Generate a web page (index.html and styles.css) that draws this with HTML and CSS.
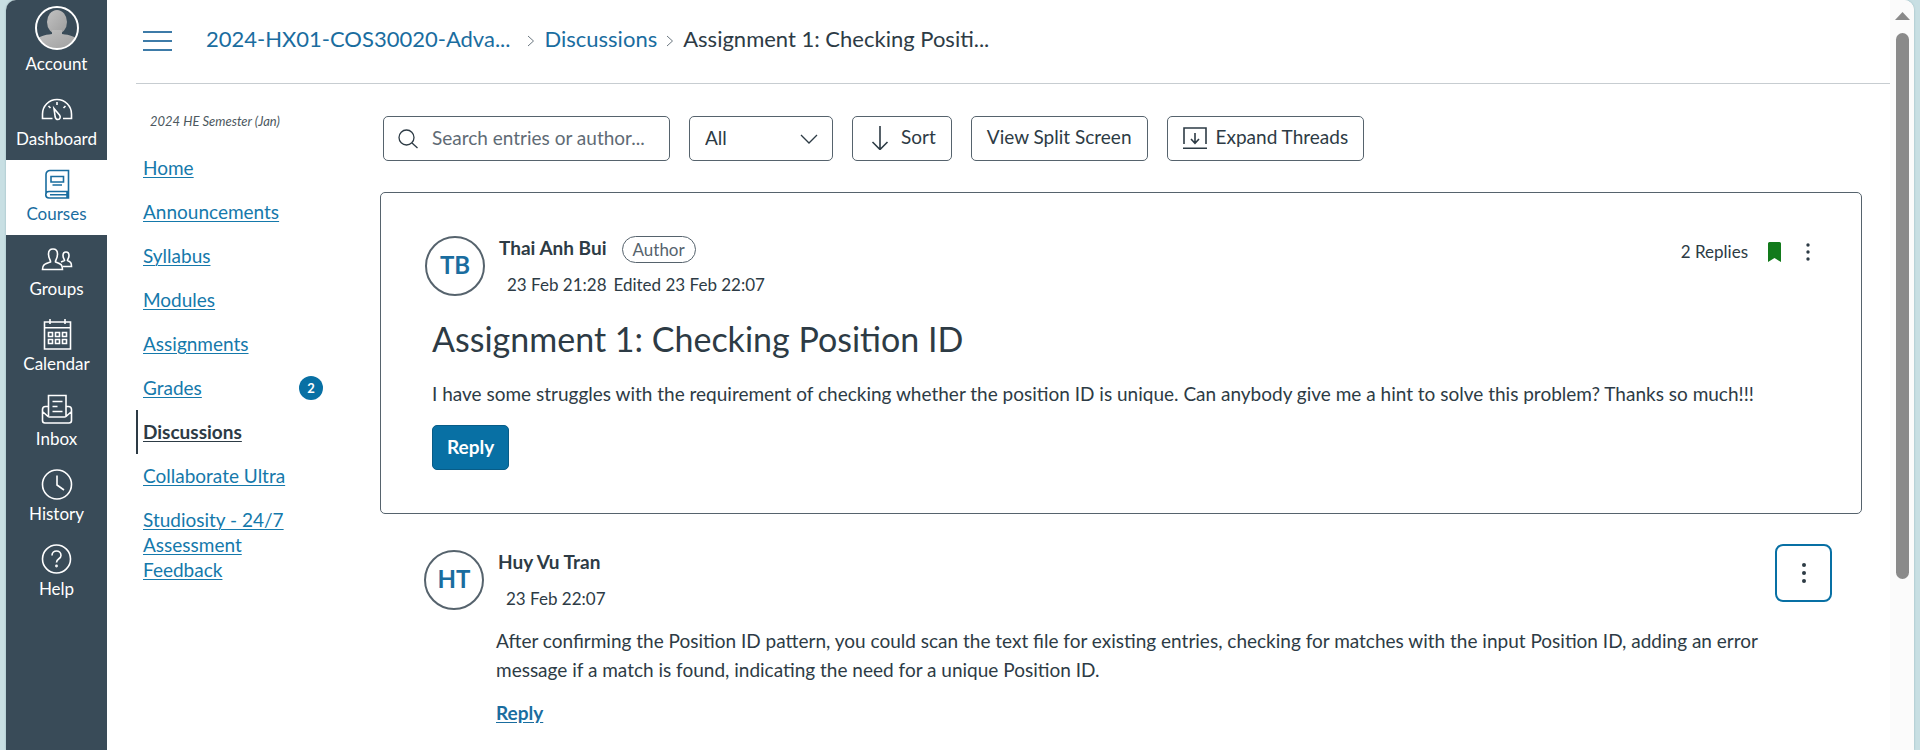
FILE: index.html
```html
<!DOCTYPE html>
<html lang="en">
<head>
<meta charset="utf-8">
<title>Assignment 1: Checking Position ID</title>
<link rel="stylesheet" href="styles.css">
</head>
<body>
<div class="app">
  <nav class="rail" aria-label="Global navigation">
    <a class="rail-item rail-account" href="#">
      <svg class="rail-avatar" viewBox="0 0 44 44" aria-hidden="true">
        <defs>
          <clipPath id="face"><circle cx="22" cy="22" r="21"/></clipPath>
          <linearGradient id="person" x1="0" y1="0" x2="1" y2="1"><stop offset="0" stop-color="#c2c2c2"/><stop offset="1" stop-color="#9c9c9c"/></linearGradient>
        </defs>
        <g clip-path="url(#face)" fill="url(#person)">
          <ellipse cx="22" cy="16" rx="10" ry="12"/>
          <path d="M17 24h10v4c8 1 14 2 16 8v9H1v-9c2-6 8-7 16-8z"/>
        </g>
        <circle cx="22" cy="22" r="21" fill="none" stroke="#fff" stroke-width="2"/>
      </svg>
      <span>Account</span>
    </a>
    <a class="rail-item" href="#">
      <svg class="rail-icon" viewBox="0 0 32 32" aria-hidden="true"><path d="M11.500 25.500H1.500V21a14.500 14.500 0 0 1 29 0v4.500H22M16 9v3M7.500 13l2 2M24.500 13l-2 2"/><path d="M13 15.500l5.500 6.500c1.500 2 .5 4.500-1.500 4.500-1.500 0-2.500-1-2.800-2.500z"/></svg>
      <span>Dashboard</span>
    </a>
    <a class="rail-item rail-item-active" href="#" aria-current="page">
      <svg class="rail-icon" viewBox="0 0 32 32" aria-hidden="true"><path d="M27.500 23V2.500H9a4 4 0 0 0-4 4V26M27.500 23.500H8a3 3 0 0 0 0 6.500h19.500zM9 26.700h18M26 23.500V30M10 8.500h12.500v5.500H10zM11.500 17h9.500"/></svg>
      <span>Courses</span>
    </a>
    <a class="rail-item" href="#">
      <svg class="rail-icon" viewBox="0 0 32 32" aria-hidden="true"><path d="M1.500 26.500h20c0-5-1.500-5.500-7-7.500-.5-2 2-3 2-8 0-3-1.500-5-4.500-5s-4.500 2-4.500 5c0 5 2.500 6 2 8-6.500 2-8 3-8 7.500z"/><path d="M22 23.500h8.500c0-4-1-4.500-4-6 0-1.500 1.500-2 1.500-5 0-2-1-3.500-3-3.500s-3 1.500-3 3.500c0 3 1.500 3.500 1.500 5l-3.500 1.500"/></svg>
      <span>Groups</span>
    </a>
    <a class="rail-item" href="#">
      <svg class="rail-icon" viewBox="0 0 32 32" aria-hidden="true"><path d="M3.500 4h26v27h-26zM3.500 9.700h26M9 1v5M24 1v5M7.500 14.500h4v4h-4zM14.500 14.500h4v4h-4zM21.500 14.500h4v4h-4zM7.500 21.500h4v4h-4zM14.500 21.500h4v4h-4zM21.500 21.500h4v4h-4z"/></svg>
      <span>Calendar</span>
    </a>
    <a class="rail-item" href="#">
      <svg class="rail-icon" viewBox="0 0 32 32" aria-hidden="true"><path d="M7.500 23V2.500h17.500V23M7.500 13.500h-3a3 3 0 0 0-3 3v11a2.500 2.500 0 0 0 2.500 2.500h24a2.500 2.500 0 0 0 2.500-2.500v-11a3 3 0 0 0-3-3H25M2 19l5 4.500c.5.500 1 .5 1.500.5h15c.5 0 1 0 1.500-.5l5-4.500M11.500 8.500h10M11.500 13.500h5M11.500 18.500h10"/></svg>
      <span>Inbox</span>
    </a>
    <a class="rail-item" href="#">
      <svg class="rail-icon" viewBox="0 0 32 32" aria-hidden="true"><circle cx="16" cy="16.500" r="14.500"/><path d="M16 7.500V17l7 5"/></svg>
      <span>History</span>
    </a>
    <a class="rail-item" href="#">
      <svg class="rail-icon" viewBox="0 0 32 32" aria-hidden="true"><circle cx="15.500" cy="16" r="14"/><path d="M11 12.500c0-6 9-6 9 0 0 3.500-4.500 3-4.500 7"/><circle cx="15.500" cy="23" r=".6"/></svg>
      <span>Help</span>
    </a>
  </nav>

  <div class="page">
    <header class="topbar">
      <button class="menu-toggle" type="button" aria-label="Toggle course navigation"><i></i><i></i><i></i></button>
      <nav class="crumbs" aria-label="Breadcrumbs">
        <a class="crumb-course" href="#">2024-HX01-COS30020-Adva...</a>
        <svg class="crumb-sep" viewBox="0 0 8 12" aria-hidden="true"><path d="M1 1l5.500 5L1 11"/></svg>
        <a href="#">Discussions</a>
        <svg class="crumb-sep" viewBox="0 0 8 12" aria-hidden="true"><path d="M1 1l5.500 5L1 11"/></svg>
        <span>Assignment 1: Checking Positi...</span>
      </nav>
    </header>

    <div class="columns">
      <nav class="course-nav" aria-label="Course navigation">
        <p class="term">2024 HE Semester (Jan)</p>
        <ul class="course-links">
          <li><a href="#">Home</a></li>
          <li><a href="#">Announcements</a></li>
          <li><a href="#">Syllabus</a></li>
          <li><a href="#">Modules</a></li>
          <li><a href="#">Assignments</a></li>
          <li><a href="#">Grades</a><span class="badge">2</span></li>
          <li class="active"><a href="#" aria-current="page">Discussions</a></li>
          <li><a href="#">Collaborate Ultra</a></li>
          <li><a class="narrow" href="#">Studiosity - 24/7 Assessment Feedback</a></li>
        </ul>
      </nav>

      <main class="content">
        <div class="toolbar">
          <label class="search">
            <svg class="icon-search" viewBox="0 0 20 20" aria-hidden="true"><circle cx="8.500" cy="8.500" r="7.500"/><path d="M14 14l5.500 5"/></svg>
            <input type="text" placeholder="Search entries or author..." aria-label="Search entries or author">
          </label>
          <div class="filter">
            <select aria-label="Filter by"><option>All</option></select>
            <svg class="icon-chevron" viewBox="0 0 18 10" aria-hidden="true"><path d="M1 1l8 8 8-8"/></svg>
          </div>
          <button class="btn" type="button">
            <svg class="icon-btn" viewBox="0 0 24 24" aria-hidden="true"><path d="M12 0v23M4.500 16l7.500 7.500 7.500-7.500"/></svg>
            Sort
          </button>
          <button class="btn" type="button">View Split Screen</button>
          <button class="btn" type="button">
            <svg class="icon-btn" viewBox="0 0 24 24" aria-hidden="true"><path d="M1 18V2h22v16M0 22.300h24M12 7v10M8 13l4 4.300 4-4.300"/></svg>
            Expand Threads
          </button>
        </div>

        <article class="topic">
          <header class="post-head">
            <span class="avatar">TB</span>
            <div class="who">
              <div class="name-row"><strong class="name">Thai Anh Bui</strong><span class="pill">Author</span></div>
              <p class="date"><span>23 Feb 21:28</span><span>Edited 23 Feb 22:07</span></p>
            </div>
            <div class="status">
              <span>2 Replies</span>
              <svg class="icon-bookmark" viewBox="0 0 13 20" role="img" aria-label="Subscribed"><path d="M0 1.500A1.500 1.500 0 0 1 1.500 0h10A1.500 1.500 0 0 1 13 1.500V20l-6.500-4L0 20z"/></svg>
              <button class="more" type="button" aria-label="Manage discussion"><svg class="icon-dots" viewBox="0 0 4 18" aria-hidden="true"><circle cx="2" cy="2" r="1.700"/><circle cx="2" cy="9" r="1.700"/><circle cx="2" cy="16" r="1.700"/></svg></button>
            </div>
          </header>
          <h1 class="title">Assignment 1: Checking Position ID</h1>
          <p class="body">I have some struggles with the requirement of checking whether the position ID is unique. Can anybody give me a hint to solve this problem? Thanks so much!!!</p>
          <button class="reply-btn" type="button">Reply</button>
        </article>

        <article class="entry">
          <header class="post-head">
            <span class="avatar">HT</span>
            <div class="who">
              <div class="name-row"><strong class="name">Huy Vu Tran</strong></div>
              <p class="date"><span>23 Feb 22:07</span></p>
            </div>
            <button class="more more-focus" type="button" aria-label="Manage reply"><svg class="icon-dots" viewBox="0 0 4 20" aria-hidden="true"><circle cx="2" cy="2" r="2"/><circle cx="2" cy="10" r="2"/><circle cx="2" cy="18" r="2"/></svg></button>
          </header>
          <div class="entry-body">
            <p class="body">After confirming the Position ID pattern, you could scan the text file for existing entries, checking for matches with the input Position ID, adding an error message if a match is found, indicating the need for a unique Position ID.</p>
            <a class="reply-link" href="#">Reply</a>
          </div>
        </article>
      </main>
    </div>
  </div>

  <div class="scrollbar" aria-hidden="true">
    <svg class="scroll-up" viewBox="0 0 15 8"><path d="M7.500 0L15 8H0z"/></svg>
    <div class="thumb"></div>
  </div>
</div>
</body>
</html>
```
FILE: styles.css
```css
* { box-sizing: border-box; }

body {
  margin: 0;
  background: #c8dfe3;
  color: #2d3b45;
  font: 19px/24px Lato, "Liberation Sans", sans-serif;
}

p, h1, ul { margin: 0; padding: 0; font-weight: 400; }
a { color: #1a6d9f; text-decoration: none; }
svg { display: block; flex: none; fill: none; stroke: currentColor; }
button, input, select { font: inherit; color: inherit; }

.app {
  display: flex;
  height: 100vh;
  margin: 0 6px;
  overflow: hidden;
  background: #fff;
  border-radius: 10px 10px 0 0;
  box-shadow: 0 0 2px #8fb0b5;
}

/* Global navigation */
.rail { flex: none; width: 101px; background: #394b58; }
.rail-item {
  display: flex;
  flex-direction: column;
  align-items: center;
  gap: 4px;
  height: 75px;
  padding-top: 8px;
  color: #fff;
  font-size: 17px;
  line-height: 20px;
}
.rail-account { height: 85px; padding-top: 6px; }
.rail-item-active { background: #fff; color: #1a6d9f; }
.rail-icon { width: 32px; height: 32px; stroke-width: 1.6; }
.rail-avatar { width: 44px; height: 44px; stroke: none; }

/* Header */
.page { flex: 1; min-width: 0; padding-left: 29px; }
.topbar {
  display: flex;
  align-items: center;
  height: 84px;
  padding: 0 7px 2px;
  border-bottom: 1px solid #c7cdd1;
}
.menu-toggle {
  display: flex;
  flex-direction: column;
  gap: 7px;
  width: 29px;
  margin-right: 34px;
  padding: 0;
  border: 0;
  background: none;
}
.menu-toggle i { height: 2px; background: #3d7ba8; }
.crumbs { display: flex; align-items: center; gap: 9px; font-size: 22px; line-height: 28px; padding-bottom: 4px; }
.crumb-course { margin-right: 8px; }
.crumb-sep { width: 8px; height: 12px; margin-top: 4px; color: #6b7780; }

/* Course navigation */
.columns { display: flex; }
.course-nav { flex: none; width: 187px; }
.term { padding: 27px 0 15px 14px; font-size: 13px; line-height: 20px; font-style: italic; color: #4c5860; }
.course-links { list-style: none; }
.course-links li {
  display: flex;
  align-items: center;
  justify-content: space-between;
  padding: 9px 0 10px 5px;
  border-left: 2px solid transparent;
  line-height: 25px;
}
.course-links a { color: #1579ab; text-decoration: underline; text-underline-offset: 2px; text-decoration-thickness: 1px; }
.course-links .active { border-color: #2d3b45; }
.course-links .active a { color: #2d3b45; font-weight: 700; }
.narrow { max-width: 150px; }
.badge {
  width: 24px;
  height: 24px;
  border-radius: 50%;
  background: #0870a4;
  color: #fff;
  font-size: 13px;
  font-weight: 700;
  text-align: center;
}

/* Discussion */
.content { flex: 1; min-width: 0; padding: 32px 28px 0 57px; }
.toolbar { display: flex; gap: 19px; padding-left: 3px; }
.search, .filter, .btn {
  display: flex;
  align-items: center;
  height: 45px;
  border: 1px solid #56636d;
  border-radius: 5px;
  background: #fff;
}
.search { width: 287px; padding: 0 14px; gap: 14px; }
.search input { flex: 1; min-width: 0; padding: 0 0 2px; border: 0; outline: 0; background: none; }
.search input::placeholder { color: #5f6b75; opacity: 1; }
.icon-search { width: 20px; height: 20px; stroke-width: 1.3; }
.filter { position: relative; width: 144px; }
.filter select { width: 100%; height: 100%; padding: 0 15px 2px; border: 0; outline: 0; background: none; appearance: none; }
.icon-chevron { position: absolute; right: 14px; width: 18px; height: 10px; stroke-width: 1.3; pointer-events: none; }
.btn { gap: 9px; padding: 0 15px 4px; white-space: nowrap; }
.icon-btn { width: 24px; height: 24px; margin-top: 3px; stroke-width: 1.6; }

.topic { margin-top: 31px; padding: 43px 44px; border: 1px solid #56636d; border-radius: 5px; }
.post-head { display: flex; align-items: flex-start; }
.avatar {
  flex: none;
  width: 60px;
  height: 60px;
  margin-right: 14px;
  border: 2px solid #56636d;
  border-radius: 50%;
  color: #1a6d9f;
  font-size: 24px;
  line-height: 54px;
  font-weight: 700;
  text-align: center;
}
.who { flex: 1; }
.name-row { display: flex; align-items: flex-start; gap: 15px; height: 37px; }
.name { font-weight: 700; }
.pill { padding: 0 10px; border: 1px solid #56636d; border-radius: 14px; font-size: 17px; line-height: 25px; color: #56636d; }
.date { display: flex; gap: 7px; padding-left: 8px; font-size: 17px; }
.status { display: flex; align-items: center; height: 32px; font-size: 17px; }
.icon-bookmark { width: 13px; height: 20px; margin: 0 25px 0 20px; fill: #127a1b; stroke: none; }
.more { display: flex; align-items: center; justify-content: center; padding: 0; border: 0; background: none; }
.icon-dots { height: 18px; width: 4px; fill: currentColor; stroke: none; }
.status .more { margin-right: 7px; }
.title { margin: 19px 7px 0; font-size: 34px; line-height: 46px; }
.body { line-height: 29px; }
.topic .body { margin: 17px 7px; }
.reply-btn {
  display: block;
  height: 45px;
  margin-left: 7px;
  padding: 0 14px 2px;
  border: 1px solid #085c87;
  border-radius: 5px;
  background: #0870a4;
  color: #fff;
  font-weight: 700;
}

.entry { padding: 30px 30px 0 44px; }
.more-focus { width: 57px; height: 58px; border: 2px solid #0870a4; border-radius: 8px; }
.more-focus .icon-dots { height: 20px; }
.entry .post-head { height: 82px; }
.entry .avatar, .entry .who { margin-top: 6px; }
.entry-body { padding: 0 42px 0 72px; }
.reply-link { display: inline-block; margin-top: 17px; font-weight: 700; text-decoration: underline; text-underline-offset: 2px; }

/* Window scrollbar */
.scrollbar { display: flex; flex-direction: column; align-items: center; flex: none; width: 24px; padding-top: 12px; background: #fbfbfb; }
.scroll-up { width: 15px; height: 8px; margin-bottom: 13px; fill: #8a8a8a; stroke: none; }
.thumb { width: 13px; height: 74%; border-radius: 7px; background: #8a8a8a; }
```
